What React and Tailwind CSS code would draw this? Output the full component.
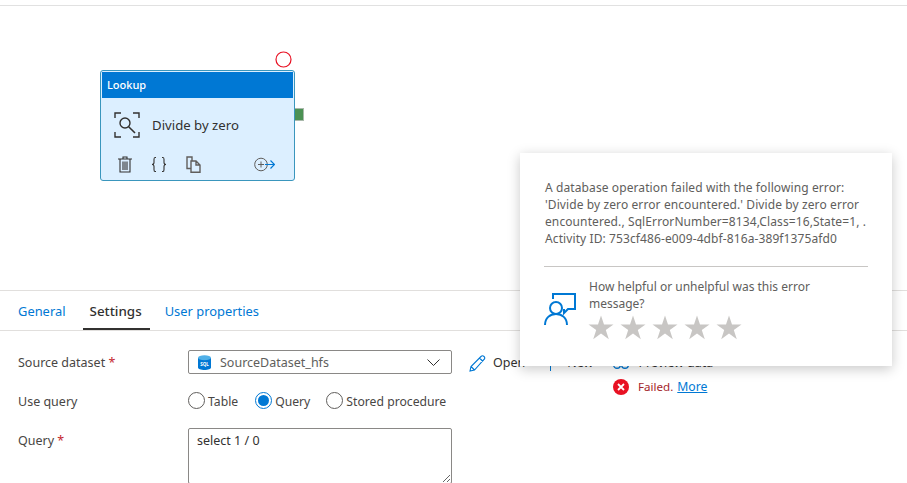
import React from "react";

const Star = () => (
  <svg width="26" height="25" viewBox="0 0 26 25" className="block">
    <path d="M13 0.5l3 9h9.500l-7.700 5.600 3 9.200L13 18.600l-7.800 5.700 3-9.200L.5 9.500H10z" fill="#c8c6c4" />
  </svg>
);

const Radio = ({ checked, label }) => (
  <div className="flex items-center gap-[3px]">
    {checked ? (
      <span className="w-[17px] h-[17px] rounded-full border border-[#0078d4] flex items-center justify-center">
        <span className="w-[11px] h-[11px] rounded-full bg-[#0078d4]" />
      </span>
    ) : (
      <span className="w-[17px] h-[17px] rounded-full border border-[#605e5c]" />
    )}
    <span className="text-[12.2px] text-[#484644] pt-[2px]">{label}</span>
  </div>
);

export default function App() {
  return (
    <div className="relative w-[907px] h-[483px] overflow-hidden bg-white font-['Noto_Sans','Open_Sans',sans-serif]">
      <div className="h-[6px] border-b border-[#e1e1e1]" />

      {/* Canvas */}
      <div className="relative h-[284px]">
        <svg className="absolute left-[275px] top-[45px]" width="17" height="17" viewBox="0 0 17 17">
          <circle cx="8.5" cy="8.5" r="7.5" fill="none" stroke="#e81123" strokeWidth="1.2" />
        </svg>
        <div className="absolute left-[294px] top-[102px] w-[10px] h-[13px] bg-[#4b9153] border-y border-r border-[#a9b9ab]" />
        <div className="absolute left-[100px] top-[64px] w-[195px] h-[111px] rounded-[3px] border border-[#3a96bd] bg-[#dcefff] overflow-hidden flex flex-col">
          <div className="h-[26px] mt-[1px] mx-[1px] bg-[#0078d4] text-white text-[11px] font-medium flex items-center pl-[5px]">
            Lookup
          </div>
          <div className="flex items-center mt-[14px] pl-[13px] gap-[12px]">
            <svg width="26" height="26" viewBox="0 0 26 26" fill="none" stroke="#323130" strokeWidth="1.4">
              <path d="M1 6V1h6M19 1h6v5M25 20v5h-6M7 25H1v-5" />
              <circle cx="11" cy="11" r="5" />
              <path d="M14.700 14.700L21 21" strokeWidth="1.6" />
            </svg>
            <span className="text-[13.2px] text-[#323130] pt-[1px]">Divide by zero</span>
          </div>
          <div className="flex items-center mt-[18px] pl-[17px]">
            <svg width="14" height="17" viewBox="0 0 14 17" fill="none" stroke="#323130" strokeWidth="1.1">
              <path d="M0 3h14M5 3V1h4v2M2 3v13h10V3M5 5.500V14M7 5.500V14M9 5.500V14" />
            </svg>
            <svg className="ml-[19px]" width="16" height="17" viewBox="0 0 16 17" fill="none" stroke="#323130" strokeWidth="1.1">
              <path d="M5 1.500H4C3 1.500 3 2.500 3 3.500V6.500C3 7.500 2 8.500 1 8.500C2 8.500 3 9.500 3 10.500V13.500C3 14.500 3 15.500 4 15.500H5" />
              <path d="M11 1.500H12C13 1.500 13 2.500 13 3.500V6.500C13 7.500 14 8.500 15 8.500C14 8.500 13 9.500 13 10.500V13.500C13 14.500 13 15.500 12 15.500H11" />
            </svg>
            <svg className="ml-[19px]" width="15" height="17" viewBox="0 0 15 17" fill="none" stroke="#605e5c" strokeWidth="1.4">
              <path d="M5 12.500H1V1h5v4" />
              <path d="M5 5h5l4 4v7.300H5zM10 5v4h4" />
            </svg>
            <svg className="ml-[53px]" width="21" height="15" viewBox="0 0 21 15" fill="none">
              <circle cx="7" cy="7.500" r="6.300" stroke="#605e5c" />
              <path d="M7 4.500v6M4 7.500h6" stroke="#605e5c" />
              <path d="M11 7.500h9M16.500 3.500l4 4-4 4" stroke="#0078d4" strokeWidth="1.2" />
            </svg>
          </div>
        </div>
      </div>

      {/* Tabs */}
      <div className="h-[41px] border-y border-[#e1dfdd] flex items-end pl-[10px] text-[12.9px]">
        <div className="px-[8px] h-[40px] pt-[4px] flex items-center text-[#0078d4]">General</div>
        <div className="ml-[9px] pl-[7px] pr-[8px] h-[40px] pt-[5px] flex items-center text-[13.4px] text-[#323130] font-medium border-b-2 border-[#323130]">Settings</div>
        <div className="ml-[7px] px-[8px] h-[40px] pt-[4px] flex items-center text-[#0078d4]">User properties</div>
      </div>

      {/* Form */}
      <div className="flex pl-[18px] pt-[19px] text-[12.5px] text-[#484644]">
        <div className="w-[434px] shrink-0">
          <div className="flex items-center h-[24px]">
            <div className="w-[170px] pt-[2px]">
              Source dataset <span className="text-[#c4262e]">*</span>
            </div>
            <div className="w-[264px] h-[24px] rounded-[2px] border border-[#8a8886] flex items-center pl-[9px] pr-[11px]">
              <svg width="13" height="15" viewBox="0 0 13 15">
                <path d="M0 3v9.500C0 14 3 15 6.500 15S13 14 13 12.500V3z" fill="#0078d4" />
                <ellipse cx="6.500" cy="2.700" rx="6.500" ry="2.500" fill="#50b0e8" />
                <text x="6.500" y="10.500" textAnchor="middle" fontSize="4.500" fontWeight="700" fill="#fff">SQL</text>
              </svg>
              <span className="ml-[9px] pt-[2px] text-[#605e5c]">SourceDataset_hfs</span>
              <svg className="ml-auto" width="13" height="7" viewBox="0 0 13 7" fill="none" stroke="#323130" strokeWidth="1">
                <path d="M.5.500l6 6 6-6" />
              </svg>
            </div>
          </div>
          <div className="flex items-center h-[24px] mt-[15px]">
            <div className="w-[170px] pt-[2px]">Use query</div>
            <div className="flex items-center">
              <Radio label="Table" />
              <div className="ml-[17px]"><Radio checked label="Query" /></div>
              <div className="ml-[16px]"><Radio label="Stored procedure" /></div>
            </div>
          </div>
          <div className="flex items-start mt-[15px]">
            <div className="w-[170px] pt-[4px]">
              Query <span className="text-[#c4262e]">*</span>
            </div>
            <textarea
              readOnly
              defaultValue="select 1 / 0"
              className="block w-[264px] h-[56px] rounded-[2px] border border-[#8a8886] pl-[8px] pt-[3px] text-[#323130] outline-none"
            />
          </div>
        </div>
        <div className="pl-[17px]">
          <div className="flex items-center h-[24px] pt-[3px]">
            <svg width="17" height="17" viewBox="0 0 17 17" fill="none" stroke="#0078d4" strokeWidth="1.1">
              <path d="M1 16l1-4.500L12 1.500c1-1 2-1 3 0s1 2 0 3L5.500 15zM2 11.500L5.500 15M10.500 3l3.500 3.500" />
            </svg>
            <span className="ml-[7px] text-[#323130]">Open</span>
            <span className="ml-[25px] w-[1px] h-[14px] bg-[#0078d4]" />
            <span className="ml-[16px] text-[#323130]">New</span>
            <svg className="ml-[20px]" width="16" height="12" viewBox="0 0 16 12" fill="none" stroke="#0078d4" strokeWidth="1.4">
              <circle cx="4" cy="7" r="3.300" />
              <circle cx="12" cy="7" r="3.300" />
            </svg>
            <span className="ml-[9px] text-[#323130]">Preview data</span>
          </div>
          <div className="flex items-center mt-[3px] ml-[144px] h-[20px]">
            <svg width="16" height="16" viewBox="0 0 16 16">
              <circle cx="8" cy="8" r="8" fill="#e81123" />
              <path d="M5 5l6 6M11 5l-6 6" stroke="#fff" strokeWidth="1.8" />
            </svg>
            <span className="ml-[9px] text-[11.6px] text-[#a4262c]">Failed.</span>
            <span className="ml-[4px] text-[12.2px] text-[#0078d4] underline">More</span>
          </div>
        </div>
      </div>

      {/* Popover */}
      <div className="absolute left-[520px] top-[153px] w-[372px] h-[213px] bg-white shadow-[0_3px_12px_rgba(0,0,0,0.22)] pt-[26px] px-[24px] text-[12px] leading-[17px] text-[#605e5c]">
        <div className="ml-[1px] tracking-[0.1px]">
          <p className="whitespace-nowrap">A database operation failed with the following error:</p>
          <p className="whitespace-nowrap">'Divide by zero error encountered.' Divide by zero error</p>
          <p className="whitespace-nowrap">encountered., SqlErrorNumber=8134,Class=16,State=1, .</p>
          <p className="whitespace-nowrap">Activity ID: 753cf486-e009-4dbf-816a-389f1375afd0</p>
        </div>
        <div className="h-[1px] w-[324px] bg-[#c8c6c4] mt-[19px]" />
        <div className="flex mt-[11px]">
          <svg className="mt-[15px] shrink-0" width="33" height="33" viewBox="0 0 33 33" fill="none" stroke="#0078d4" strokeWidth="2">
            <path d="M9 6V1h22v15h-7l-4 4v-4" />
            <circle cx="12" cy="15" r="6" />
            <path d="M1 32c0-7 5-11 11-11s11 4 11 11" />
          </svg>
          <div className="ml-[12px]">
            <p className="whitespace-nowrap">How helpful or unhelpful was this error</p>
            <p>message?</p>
            <div className="flex gap-[6px] mt-[3px] -ml-[1px]">
              <Star /><Star /><Star /><Star /><Star />
            </div>
          </div>
        </div>
      </div>
    </div>
  );
}
